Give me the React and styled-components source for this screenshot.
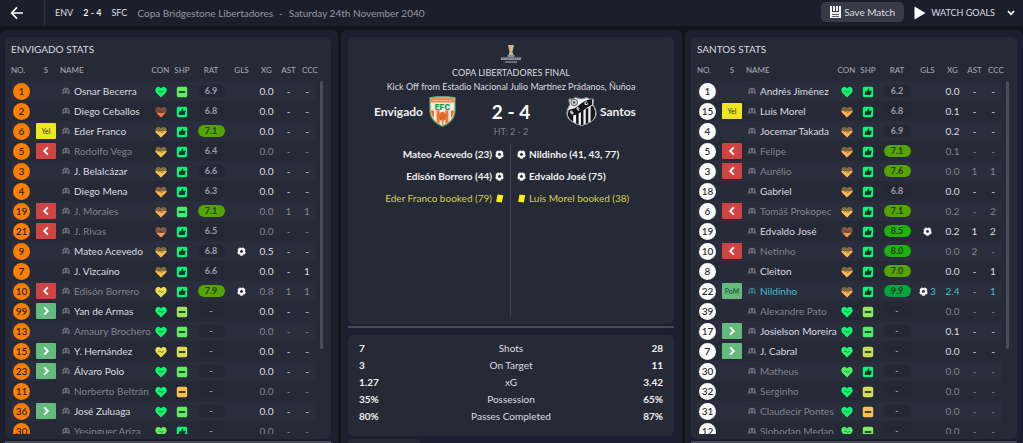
import React from 'react'
import styled, { createGlobalStyle, css } from 'styled-components'

const home = [
  { no: 1, name: 'Osnar Becerra', con: '#14f56f', full: true, shp: '#5ff061', rat: '6.9', xg: '0.0' },
  { no: 2, name: 'Diego Ceballos', con: '#f4774a', low: true, shp: '#0bf574', thumb: true, rat: '6.8', xg: '0.0' },
  { no: 6, tag: 'yel', name: 'Eder Franco', con: '#fbc548', shp: '#0bf574', thumb: true, rat: '7.1', xg: '0.0' },
  { no: 5, tag: 'out', name: 'Rodolfo Vega', con: '#fbc548', shp: '#0bf574', thumb: true, rat: '6.4', xg: '0.0', dim: true },
  { no: 3, name: 'J. Belalcázar', con: '#fbc548', shp: '#0bf574', thumb: true, rat: '6.6', xg: '0.0' },
  { no: 4, name: 'Diego Mena', con: '#fbb04c', shp: '#0bf574', thumb: true, rat: '6.3', xg: '0.0' },
  { no: 19, tag: 'out', name: 'J. Morales', con: '#fbb04c', shp: '#3cf06b', rat: '7.1', xg: '0.0', ast: 1, ccc: 1, dim: true },
  { no: 21, tag: 'out', name: 'J. Rivas', con: '#f99a54', low: true, shp: '#0bf574', thumb: true, rat: '6.5', xg: '0.0', dim: true },
  { no: 9, name: 'Mateo Acevedo', con: '#fbbd4a', shp: '#0bf574', thumb: true, rat: '6.8', goals: 1, xg: '0.5' },
  { no: 7, name: 'J. Vizcaíno', con: '#fbbd4a', shp: '#0bf574', thumb: true, rat: '6.6', xg: '0.0', ccc: 1 },
  { no: 10, tag: 'out', name: 'Edisón Borrero', con: '#f2de4e', full: true, shp: '#0bf574', thumb: true, rat: '7.9', goals: 1, xg: '0.8', ast: 1, ccc: 1, dim: true },
  { no: 99, tag: 'in', name: 'Yan de Armas', con: '#14f56f', full: true, shp: '#9de65a', xg: '0.0' },
  { no: 13, name: 'Amaury Brochero', con: '#14f56f', full: true, shp: '#5ff061', xg: '0.0', dim: true },
  { no: 15, tag: 'in', name: 'Y. Hernández', con: '#e6e04f', full: true, shp: '#dcdc55', xg: '0.0' },
  { no: 23, tag: 'in', name: 'Álvaro Polo', con: '#14f56f', full: true, shp: '#5ff061', xg: '0.0' },
  { no: 11, name: 'Norberto Beltrán', con: '#14f56f', full: true, shp: '#fbc04c', xg: '0.0', dim: true },
  { no: 36, tag: 'in', name: 'José Zuluaga', con: '#14f56f', full: true, shp: '#5ff061', xg: '0.0' },
  { no: 30, name: 'Yesinguer Ariza', con: '#5ff061', full: true, shp: '#0bf574', thumb: true, xg: '0.0', dim: true },
]

const away = [
  { no: 1, name: 'Andrés Jiménez', con: '#14f56f', full: true, shp: '#0bf574', thumb: true, rat: '6.2', xg: '0.0' },
  { no: 15, tag: 'yel', name: 'Luis Morel', con: '#fbb04c', shp: '#0bf574', thumb: true, rat: '6.8', xg: '0.1' },
  { no: 4, name: 'Jocemar Takada', con: '#fbb04c', shp: '#0bf574', thumb: true, rat: '6.9', xg: '0.2' },
  { no: 5, tag: 'out', name: 'Felipe', con: '#fbb04c', shp: '#0bf574', thumb: true, rat: '7.1', xg: '0.1', dim: true },
  { no: 3, tag: 'out', name: 'Aurélio', con: '#fbb54c', shp: '#0bf574', thumb: true, rat: '7.6', xg: '0.0', ast: 1, ccc: 1, dim: true },
  { no: 18, name: 'Gabriel', con: '#fbb54c', shp: '#0bf574', thumb: true, rat: '6.8', xg: '0.0' },
  { no: 6, tag: 'out', name: 'Tomáš Prokopec', con: '#fbc548', shp: '#0bf574', thumb: true, rat: '7.1', xg: '0.2', ccc: 2, dim: true },
  { no: 19, name: 'Edvaldo José', con: '#f99450', low: true, shp: '#0bf574', thumb: true, rat: '8.5', goals: 1, xg: '0.2', ast: 1, ccc: 2 },
  { no: 10, tag: 'out', name: 'Netinho', con: '#fbb54c', shp: '#0bf574', thumb: true, rat: '8.0', xg: '0.0', ast: 2, dim: true },
  { no: 8, name: 'Cleiton', con: '#fbb54c', shp: '#0bf574', thumb: true, rat: '7.0', xg: '0.0', ccc: 1 },
  { no: 22, tag: 'pom', name: 'Nildinho', con: '#fbb04c', shp: '#0bf574', thumb: true, rat: '9.9', goals: 3, xg: '2.4', ccc: 1, star: true },
  { no: 39, name: 'Alexandre Pato', con: '#14f56f', full: true, shp: '#8ee85c', xg: '0.0', dim: true },
  { no: 17, tag: 'in', name: 'Josielson Moreira', con: '#14f56f', full: true, shp: '#4cf066', xg: '0.1' },
  { no: 7, tag: 'in', name: 'J. Cabral', con: '#2bf56a', full: true, shp: '#bfe058', xg: '0.0' },
  { no: 30, name: 'Matheus', con: '#4cf066', full: true, shp: '#0bf574', thumb: true, xg: '0.0', dim: true },
  { no: 32, name: 'Serginho', con: '#14f56f', full: true, shp: '#d8dc55', xg: '0.0', dim: true },
  { no: 31, name: 'Claudecir Pontes', con: '#14f56f', full: true, shp: '#fbc04c', xg: '0.0', dim: true },
  { no: 12, name: 'Slobodan Medan', con: '#4cf066', full: true, shp: '#7fea5e', xg: '0.0', dim: true },
]

const events = [
  { type: 'goal', home: 'Mateo Acevedo (23)', away: 'Nildinho (41, 43, 77)' },
  { type: 'goal', home: 'Edisón Borrero (44)', away: 'Edvaldo José (75)' },
  { type: 'card', home: 'Eder Franco booked (79)', away: 'Luis Morel booked (38)' },
]

const totals = [
  ['7', 'Shots', '28'],
  ['3', 'On Target', '11'],
  ['1.27', 'xG', '3.42'],
  ['35%', 'Possession', '65%'],
  ['80%', 'Passes Completed', '87%'],
]

const heartPath = 'M6 11.6 L1.2 6.8 C-.4 5 .2 .9 3.3 .9 C4.7 .9 5.5 1.6 6 2.4 C6.5 1.6 7.3 .9 8.7 .9 C11.8 .9 12.4 5 10.8 6.8 Z'

function Heart({ color, full, low }) {
  const top = low ? 7 : 5
  return (
    <Icon viewBox="0 0 12 12" $size={12}>
      <path d={heartPath} fill={color} opacity={full ? 1 : 0.45} />
      {!full && (
        <svg x="0" y={top} width="12" height={12 - top} viewBox={`0 ${top} 12 ${12 - top}`}>
          <path d={heartPath} fill={color} />
        </svg>
      )}
      <path d="M3.2 5.8 L4.8 4.9 L6.6 6.5 L8.6 5.2" fill="none" stroke="#242b35" strokeWidth="0.7" opacity="0.8" />
    </Icon>
  )
}

function Sharpness({ color, thumb }) {
  return (
    <Icon viewBox="0 0 12 12" $size={12}>
      <rect x="0.8" y="0.8" width="10.4" height="10.4" rx="1.6" fill={color} />
      {thumb
        ? <path d="M2.9 5.4 H4.6 L6.3 2.6 C7.4 2.4 7.5 3.3 7 4.8 H9 C9.7 4.8 9.8 5.4 9.5 6 L8.8 8.4 C8.6 9 8.3 9.1 7.8 9.1 H2.9 Z" fill="#17342f" />
        : <rect x="2.8" y="5.1" width="6.4" height="1.8" fill="#22382f" />}
    </Icon>
  )
}

function Ball() {
  return (
    <Icon viewBox="0 0 12 12" $size={9}>
      <circle cx="6" cy="6" r="5.7" fill="#f4f4f6" />
      <path d="M6 3.8 L8.1 5.4 L7.3 7.8 H4.7 L3.9 5.4 Z" fill="#262936" />
      <path d="M4.2 0 L6 1.7 L7.8 0 Z M12 4 L10.3 5 L11.9 7.2 Z M10.6 10.4 L8.7 9.4 L8.2 12 Z M1.4 10.4 L3.3 9.4 L3.8 12 Z M0 4 L1.7 5 L.1 7.2 Z" fill="#262936" />
    </Icon>
  )
}

function Card() {
  return (
    <Icon viewBox="0 0 10 10" $size={9}>
      <path d="M2.8 .6 L9.2 1.5 L7.6 9.4 L1.2 8.5 Z" fill="#f7ec1c" />
    </Icon>
  )
}

function Person() {
  return (
    <Icon viewBox="0 0 8 8" $size={8}>
      <path d="M1 7.2 V4 A3 2.9 0 0 1 7 4 V7.2" fill="none" stroke="currentColor" strokeWidth="1" />
      <path d="M2.6 3.4 A1.4 1.4 0 0 1 5.4 3.4 V5.2 H2.6 Z M1 5.2 H7 V6.2 H1 Z" fill="currentColor" opacity="0.7" />
    </Icon>
  )
}

function Arrow({ left }) {
  return (
    <Icon viewBox="0 0 10 10" $size={10}>
      <path d={left ? 'M6.8 1.4 L3.2 5 L6.8 8.6' : 'M3.2 1.4 L6.8 5 L3.2 8.6'} fill="none" stroke="#fff" strokeWidth="1.9" />
    </Icon>
  )
}

function Trophy() {
  return (
    <svg width="22" height="20" viewBox="0 0 22 20">
      <path d="M8 1 H14 L13.2 5 L12.4 8 L13.6 11 H8.4 L9.6 8 L8.8 5 Z" fill="#b9b3a6" />
      <path d="M10 2 H12.4 L11.8 9 H10.4 Z" fill="#e2b866" />
      <path d="M7.6 11 H14.4 V13 H7.6 Z" fill="#8d8f99" />
      <path d="M1 13.4 H21 V16 H1 Z" fill="#989aa5" />
      <path d="M2.5 14.7 H19.5" stroke="#4b4e5b" strokeWidth="0.7" strokeDasharray="1.4 0.8" />
      <path d="M5 17.2 H17 V18.8 H5 Z" fill="#7d7f8b" />
    </svg>
  )
}

function EnvigadoCrest() {
  return (
    <svg width="27" height="31" viewBox="0 0 27 31">
      <path d="M1 1.6 Q13.5 -.4 26 1.6 V16 Q25 25.5 13.5 30.4 Q2 25.5 1 16 Z" fill="#f4e9df" stroke="#5f9f6c" strokeWidth="1.2" />
      <path d="M2 2.4 Q13.5 .8 25 2.4 V6.4 H2 Z" fill="#ee8650" />
      <path d="M4 4.5 H23" stroke="#f9d3bb" strokeWidth="1" strokeDasharray="1.5 0.8" />
      <path d="M2 14.6 H5 V22.6 Q2.6 19.5 2 16 Z M7.6 14.6 H10.6 V28 L7.6 26 Z M16.4 14.6 H19.4 V26 L16.4 28 Z M22 14.6 H25 V16 Q24.4 19.5 22 22.6 Z M12.6 25 H14.4 V29 L13.5 29.4 Z" fill="#ee7434" />
      <circle cx="13.5" cy="20.5" r="4.4" fill="#ef7838" />
      <path d="M13.5 18.4 L15.5 20 L14.7 22.3 H12.3 L11.5 20 Z M13.5 16 V18.4 M9.4 19.2 L11.5 20 M17.6 19.2 L15.5 20 M11.2 24.2 L12.3 22.3 M15.8 24.2 L14.7 22.3" fill="none" stroke="#c4511c" strokeWidth="0.8" />
      <text x="13.5" y="14" textAnchor="middle" fontFamily="Inter, sans-serif" fontWeight="800" fontSize="8" fill="#159a52">EFC</text>
    </svg>
  )
}

function SantosCrest() {
  const outline = 'M3 3 Q7 4 9.5 1.6 Q16 4.4 21.5 1.6 Q24 4 28 3 Q29 6 28 9 Q32 14 31 20 Q29.6 27 16 30.6 Q2.4 27 1 20 Q0 14 4 9 Q3 6 3 3 Z'
  return (
    <svg width="31" height="31" viewBox="0 0 32 32">
      <path d={outline} fill="#f1f1f1" />
      <path d="M4.4 20 L7.4 19 V27 Q3.4 24.6 2 20 Z M10.4 18 L13 17 V29.4 L10.4 28.4 Z M15.4 16 L18 14.6 V29.8 L15.4 30.2 Z M20.4 13.4 L23 12 V28.2 L20.4 29 Z M25.4 10.6 L28 10 Q30.8 15 30 20 Q29 24 25.4 26.6 Z" fill="#15161b" />
      <path d="M2.6 14.4 Q9 13.4 14 9 Q20 3.4 27 3 L27 9 Q22 11 17 15.6 Q10 21 1.6 20.8 Z" fill="#15161b" />
      <circle cx="8.4" cy="6.6" r="3.4" fill="#d9d9dc" stroke="#33353d" strokeWidth="0.8" />
      <path d="M8.4 5.2 L9.7 6.2 L9.2 7.8 H7.6 L7.1 6.2 Z" fill="#33353d" />
      <g fontFamily="Inter, sans-serif" fontWeight="800" fontSize="5" fill="#fff">
        <text x="5" y="19.4" transform="rotate(-20 5 19.4)">S</text>
        <text x="12.6" y="15.8" transform="rotate(-38 12.6 15.8)">F</text>
        <text x="20" y="10" transform="rotate(-30 20 10)">C</text>
      </g>
      <path d={outline} fill="none" stroke="#8b8d96" strokeWidth="1" />
    </svg>
  )
}

function ratingColor(rat) {
  const value = Number(rat)
  if (value >= 9) return '#06a53d'
  if (value >= 8) return '#1fb20a'
  if (value >= 7) return '#55a405'
  return null
}

function PlayerRow({ player, side }) {
  const { no, tag, name, con, full, low, shp, thumb, rat, goals, xg, ast, ccc, dim, star } = player
  return (
    <Row $dim={dim} $star={star}>
      <td><Shirt $side={side}>{no}</Shirt></td>
      <td>
        {tag && (
          <Tag $kind={tag}>
            {tag === 'yel' && 'Yel'}
            {tag === 'pom' && 'PoM'}
            {tag === 'out' && <Arrow left />}
            {tag === 'in' && <Arrow />}
          </Tag>
        )}
      </td>
      <td>
        <Name><PersonSlot $star={star}><Person /></PersonSlot>{name}</Name>
      </td>
      <td><Heart color={con} full={full} low={low} /></td>
      <td><Sharpness color={shp} thumb={thumb} /></td>
      <td><Rating $color={ratingColor(rat)}>{rat || '-'}</Rating></td>
      <td>{goals && <Goals><Ball />{goals > 1 && goals}</Goals>}</td>
      <td>{xg}</td>
      <td>{ast || '-'}</td>
      <td>{ccc || '-'}</td>
    </Row>
  )
}

function TeamStats({ title, players, side }) {
  return (
    <StatsCard>
      <CardTitle>{title}</CardTitle>
      <TableArea>
        <TableScroll>
          <Table>
            <colgroup>
              <Col $w={21} /><Col $w={28} /><col /><Col $w={21} /><Col $w={22} />
              <Col $w={36} /><Col $w={25} /><Col $w={25} /><Col $w={19} /><Col $w={18} />
            </colgroup>
            <thead>
              <tr>
                <Th $left>NO.</Th>
                <Th>S</Th>
                <Th $left>NAME</Th>
                <Th>CON</Th>
                <Th>SHP</Th>
                <Th>RAT</Th>
                <Th>GLS</Th>
                <Th>XG</Th>
                <Th>AST</Th>
                <Th $last>CCC</Th>
              </tr>
            </thead>
            <tbody>
              {players.map((player) => <PlayerRow key={player.no} player={player} side={side} />)}
            </tbody>
          </Table>
        </TableScroll>
        <Track><Thumb /></Track>
      </TableArea>
    </StatsCard>
  )
}

function EventIcon({ type }) {
  return type === 'goal' ? <Ball /> : <Card />
}

function MatchCentre() {
  return (
    <>
      <Timeline>
        <Trophy />
        <Competition>COPA LIBERTADORES FINAL</Competition>
        <Venue>Kick Off from Estadio Nacional Julio Martínez Prádanos, Ñuñoa</Venue>
        <Teams>
          <Team $home>Envigado<EnvigadoCrest /></Team>
          <Score>2 - 4</Score>
          <Team><SantosCrest />Santos</Team>
        </Teams>
        <HalfTime>HT: 2 - 2</HalfTime>
        <Events>
          <EventSide $home>
            {events.map((e) => <Event key={e.home} $type={e.type}>{e.home}<EventIcon type={e.type} /></Event>)}
          </EventSide>
          <EventSide>
            {events.map((e) => <Event key={e.away} $type={e.type}><EventIcon type={e.type} />{e.away}</Event>)}
          </EventSide>
        </Events>
      </Timeline>
      <Divider />
      <Totals>
        {totals.map(([left, label, right]) => (
          <TotalRow key={label}>
            <strong>{left}</strong>
            <span>{label}</span>
            <strong>{right}</strong>
          </TotalRow>
        ))}
      </Totals>
      <NextPanel />
    </>
  )
}

function App() {
  return (
    <Page>
      <GlobalStyle />
      <Header>
        <BackButton type="button" aria-label="Back">
          <svg width="14" height="14" viewBox="0 0 14 14" fill="none" stroke="#fff" strokeWidth="1.6">
            <path d="M7 1.4 L1.6 7 L7 12.6 M1.6 7 H13" />
          </svg>
        </BackButton>
        <Fixture>
          <span>ENV</span>
          <b>2 - 4</b>
          <span>SFC</span>
        </Fixture>
        <Details>
          <span>Copa Bridgestone Libertadores</span>
          <span>-</span>
          <span>Saturday 24th November 2040</span>
        </Details>
        <SaveButton type="button">
          <svg width="11" height="12" viewBox="0 0 11 12">
            <path d="M0 0 H2 V6 H9 V0 H11 V12 H0 Z M3 0 H5 V5 H3 Z M6 0 H8 V5 H6 Z" fill="#f0f0f2" />
            <path d="M2 8.5 H9 M2 10.5 H9" stroke="#383a47" strokeWidth="0.8" />
          </svg>
          Save Match
        </SaveButton>
        <WatchButton type="button">
          <svg width="12" height="14" viewBox="0 0 12 14"><path d="M.5 .5 L11.5 7 L.5 13.5 Z" fill="#fff" /></svg>
          WATCH GOALS
          <Chevron width="8" height="6" viewBox="0 0 8 6"><path d="M1 1.2 L4 4.2 L7 1.2" fill="none" stroke="#fff" strokeWidth="1.7" /></Chevron>
        </WatchButton>
      </Header>
      <Main>
        <Panel $pad="7px 7px 0 5px">
          <TeamStats title="ENVIGADO STATS" players={home} side="home" />
          <Divider />
        </Panel>
        <Panel $pad="7px 8px 0 7px"><MatchCentre /></Panel>
        <Panel $pad="7px 6px 0 6px">
          <TeamStats title="SANTOS STATS" players={away} side="away" />
          <Divider />
        </Panel>
      </Main>
    </Page>
  )
}

export default App

const GlobalStyle = createGlobalStyle`
  * {
    box-sizing: border-box;
  }

  body {
    margin: 0;
    background: #131417;
  }

  button {
    font: inherit;
    color: inherit;
    border: 0;
    padding: 0;
    background: none;
    cursor: pointer;
  }
`

const Page = styled.div`
  display: flex;
  flex-direction: column;
  height: 100vh;
  overflow: hidden;
  font-family: Lato, 'Liberation Sans', sans-serif;
  font-size: 10px;
  line-height: 14px;
  color: #dcdde2;
`

const Header = styled.header`
  display: flex;
  align-items: center;
  height: 26px;
  padding-right: 8px;
  margin-bottom: 4px;
  background: #1b1f2c;
  white-space: nowrap;
`

const BackButton = styled.button`
  display: flex;
  align-items: center;
  padding-left: 10px;
  width: 45px;
  height: 26px;
  border-right: 1px solid #2a2e3d;
`

const Fixture = styled.div`
  display: flex;
  gap: 10px;
  padding-left: 10px;
  font-size: 9px;

  b {
    font-weight: 600;
    color: #fff;
  }
`

const Details = styled.div`
  display: flex;
  flex: 1;
  gap: 6px;
  padding-left: 10px;
  color: #9698a3;
`

const SaveButton = styled.button`
  display: flex;
  align-items: center;
  gap: 3px;
  height: 20px;
  padding: 0 9px;
  margin: 0 10px 3px 0;
  border-radius: 5px;
  background: #383a47;
`

const WatchButton = styled.button`
  display: flex;
  align-items: center;
  gap: 5px;
  font-size: 9px;
`

const Chevron = styled.svg`
  margin-left: 7px;
`

const Main = styled.main`
  display: grid;
  grid-template-columns: minmax(0, 1fr) 341px minmax(0, 1fr);
  gap: 3px;
  flex: 1;
  min-height: 0;
`

const Panel = styled.section`
  display: flex;
  flex-direction: column;
  min-height: 0;
  padding: ${(props) => props.$pad};
  border-radius: 6px 6px 0 0;
  background: #1c1f2f;
`

const Divider = styled.div`
  flex: none;
  height: 2px;
  margin-top: 2px;
  background: #484a58;
`

const InnerCard = styled.div`
  border-radius: 6px;
  background: #262936;
`

const StatsCard = styled(InnerCard)`
  display: flex;
  flex-direction: column;
  flex: 1;
  min-height: 0;
  padding: 5px 8px 5px 6px;
`

const CardTitle = styled.h2`
  margin: 0 0 7px;
  font-size: 10px;
  font-weight: 400;
  line-height: 14px;
`

const TableArea = styled.div`
  display: flex;
  flex: 1;
  gap: 4px;
  min-height: 0;
`

const TableScroll = styled.div`
  flex: 1;
  min-width: 0;
  margin-right: -4px;
  padding-right: 4px;
  overflow: hidden;
`

const Table = styled.table`
  width: 100%;
  table-layout: fixed;
  border-spacing: 0;

  td {
    height: 20px;
    padding: 0;
    text-align: center;
    vertical-align: middle;
    white-space: nowrap;
  }
`

const Col = styled.col`
  width: ${(props) => props.$w}px;
`

const Th = styled.th`
  height: 18px;
  padding: 0 0 4px;
  font-size: 8px;
  font-weight: 500;
  line-height: 14px;
  color: #a3a5b0;
  text-align: ${(props) => (props.$left || props.$last ? 'left' : 'center')};
  ${(props) => props.$last && css`
    padding-left: 4px;
  `}
`

const Row = styled.tr`
  color: #dcdde2;

  ${(props) => props.$dim && css`
    color: #82848f;
  `}
  ${(props) => props.$star && css`
    color: #45bfd3;
  `}

  &:nth-child(odd) {
    background: #2a2d3b;
  }
`

const Shirt = styled.div`
  width: 17px;
  height: 17px;
  margin: 0 auto;
  border-radius: 50%;
  font-weight: 500;
  line-height: 17px;
  color: #1d1f29;
  background: ${(props) => (props.$side === 'home' ? '#fb7f05' : '#fbfbfb')};
`

const tagColors = { yel: '#efe620', pom: '#64bb7d', out: '#d04343', in: '#64bb7d' }

const Tag = styled.div`
  display: flex;
  align-items: center;
  justify-content: center;
  width: 20px;
  height: 16px;
  margin: 0 auto;
  border-radius: 1px;
  font-size: 7px;
  line-height: 16px;
  color: #25402f;
  background: ${(props) => tagColors[props.$kind]};
`

const Name = styled.div`
  display: flex;
  align-items: center;
  gap: 4px;
  padding-left: 2px;
`

const PersonSlot = styled.span`
  display: flex;
  color: ${(props) => (props.$star ? '#3a8d9c' : '#80828d')};
`

const Rating = styled.div`
  width: 27px;
  height: 12px;
  margin: 0 auto;
  border-radius: 6px;
  font-size: 9px;
  font-weight: 700;
  line-height: 12px;
  color: ${(props) => (props.$color ? '#29391f' : '#9a9ca7')};
  background: ${(props) => props.$color || '#252834'};
`

const Goals = styled.div`
  display: flex;
  align-items: center;
  justify-content: center;
  gap: 2px;
`

const Icon = styled.svg`
  display: inline-block;
  flex: none;
  width: ${(props) => props.$size}px;
  height: ${(props) => props.$size}px;
  vertical-align: middle;
`

const Track = styled.div`
  width: 3px;
  margin-top: 18px;
`

const Thumb = styled.div`
  height: 76%;
  border-radius: 2px;
  background: #4b4d5b;
`

const Timeline = styled(InnerCard)`
  display: flex;
  flex-direction: column;
  align-items: center;
  flex: 1;
  min-height: 0;
  padding: 7px 0;
`

const Competition = styled.h1`
  margin: 2px 0 0;
  font-size: 9px;
  font-weight: 400;
  line-height: 14px;
`

const Venue = styled.p`
  margin: 0;
  font-size: 9px;
  line-height: 13px;
  white-space: nowrap;
`

const Teams = styled.div`
  display: grid;
  grid-template-columns: 1fr 110px 1fr;
  align-items: center;
  width: 100%;
  margin-top: 3px;
`

const Team = styled.div`
  display: flex;
  align-items: center;
  justify-content: ${(props) => (props.$home ? 'flex-end' : 'flex-start')};
  gap: ${(props) => (props.$home ? '6px' : '3px')};
  font-size: 12px;
  font-weight: 700;
  color: #f1f1f4;
`

const Score = styled.div`
  font-size: 19px;
  font-weight: 700;
  line-height: 24px;
  color: #fff;
  text-align: center;
`

const HalfTime = styled.div`
  margin: -2px 0 6px;
  font-size: 9px;
  color: #82848f;
`

const Events = styled.div`
  display: grid;
  grid-template-columns: 1fr 1fr;
  flex: 1;
  width: 100%;
`

const EventSide = styled.div`
  display: flex;
  flex-direction: column;
  gap: 7px;
  padding: 2px 6px;
  align-items: ${(props) => (props.$home ? 'flex-end' : 'flex-start')};
  border-right: ${(props) => (props.$home ? '1px solid #3f414f' : '0')};
`

const Event = styled.div`
  display: flex;
  align-items: center;
  gap: 3px;
  line-height: 15px;
  white-space: nowrap;
  font-weight: ${(props) => (props.$type === 'goal' ? 700 : 400)};
  color: ${(props) => (props.$type === 'goal' ? '#f1f1f4' : '#d8cf55')};
`

const Totals = styled(InnerCard)`
  flex: none;
  margin-top: 7px;
  padding: 5px 11px 11px;
`

const TotalRow = styled.div`
  display: grid;
  grid-template-columns: 1fr auto 1fr;
  line-height: 17px;

  strong {
    font-weight: 700;
    color: #f1f1f4;
  }

  strong:last-child {
    text-align: right;
  }
`

const NextPanel = styled.div`
  flex: none;
  width: 72px;
  height: 4px;
  margin-top: 3px;
  border-radius: 5px 5px 0 0;
  background: #262936;
`
